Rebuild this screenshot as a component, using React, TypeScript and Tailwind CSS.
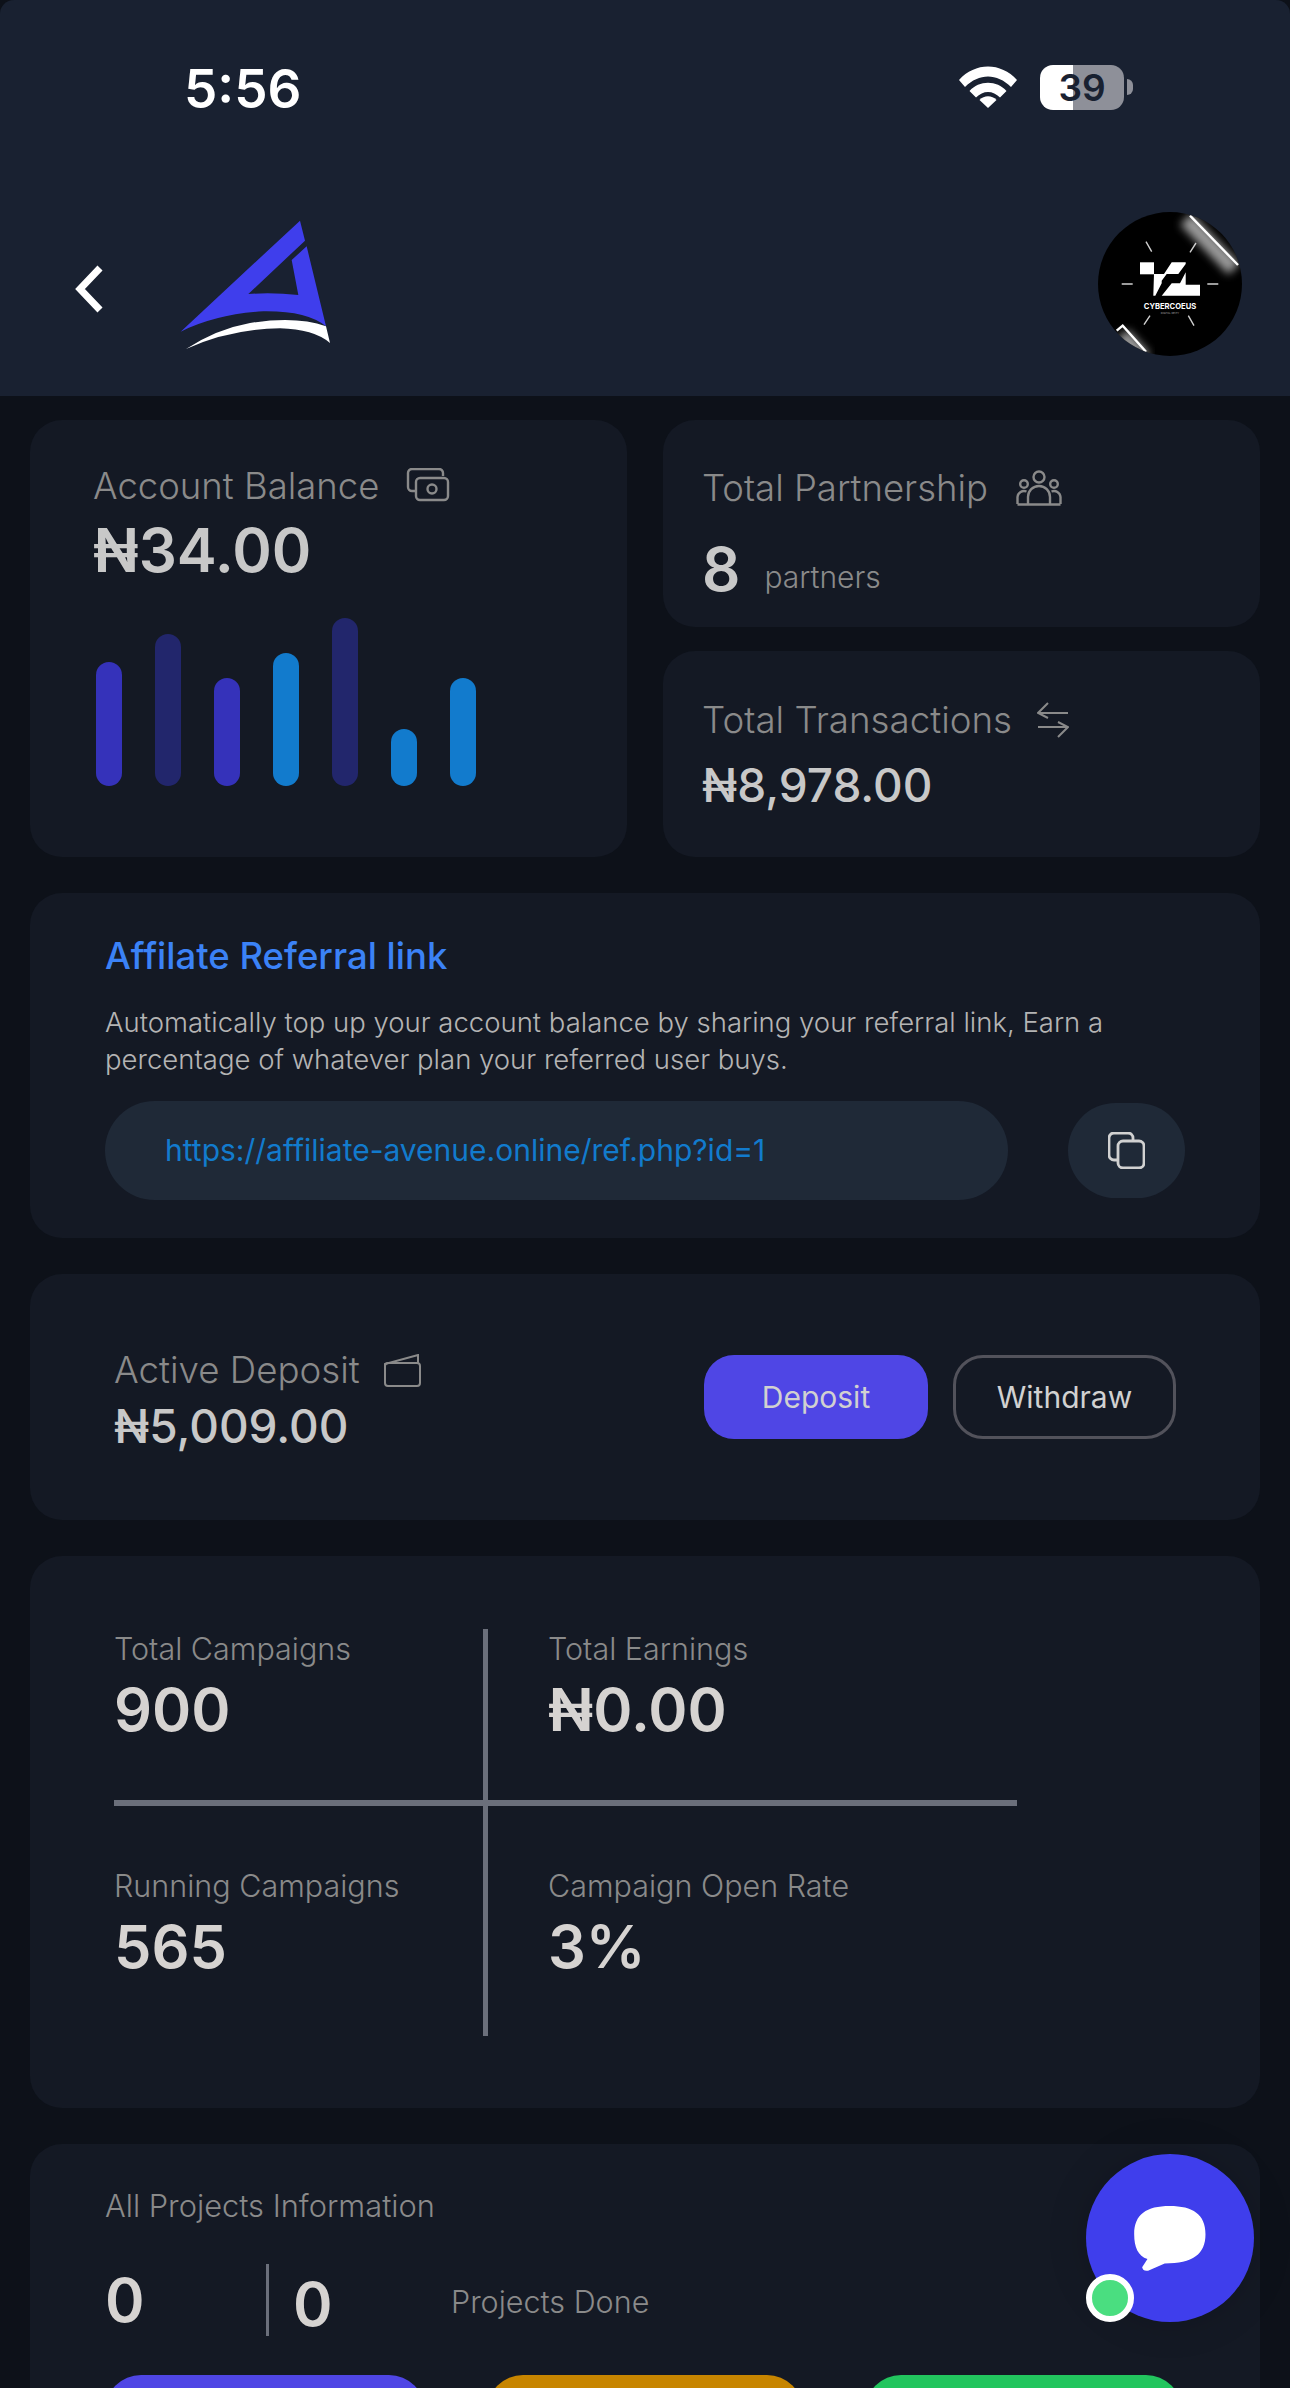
import React from "react";

const font = { fontFamily: '"Inter", "Liberation Sans", sans-serif' };

function Logo() {
  return (
    <svg viewBox="0 0 660 540" className="w-[220px] h-[180px] shrink-0">
      <path fill="#3f3eec" d="M450 95 L465 155 L295 315 Q370 310 445 318 L425 213 L470 172 L528 412 Q470 365 340 367 Q200 375 92 428 Z" />
      <path fill="#ffffff" d="M108 480 Q200 420 300 402 Q440 380 528 412 L540 462 Q490 420 390 418 Q240 420 108 480 Z" />
    </svg>
  );
}

function Avatar() {
  return (
    <svg viewBox="0 0 200 180" className="w-[200px] h-[180px] shrink-0">
      <defs>
        <clipPath id="av"><circle cx="100" cy="95" r="72" /></clipPath>
        <filter id="bl" x="-50%" y="-50%" width="200%" height="200%"><feGaussianBlur stdDeviation="4.5" /></filter>
      </defs>
      <circle cx="100" cy="95" r="72" fill="#000" />
      <g clipPath="url(#av)">
        <path d="M116 30 L164 80" stroke="#9a9a9a" strokeWidth="16" fill="none" filter="url(#bl)" />
        <path d="M52 146 L74 170" stroke="#9a9a9a" strokeWidth="16" fill="none" filter="url(#bl)" />
        <path d="M120 26.7 L168 76" stroke="#fff" strokeWidth="2.4" fill="none" />
        <path d="M46.7 141.7 L52.7 136.7 L76 162.7" stroke="#fff" strokeWidth="2.4" fill="none" />
      </g>
      <path
        stroke="#cfcfcf"
        strokeWidth="1.4"
        d="M76 52.7 L81.7 62.7 M126 54 L120 63.3 M51.7 95 L62.7 95 M137.3 95 L148.3 95 M80 126.7 L74 135.7 M118.3 126.7 L124 136.7"
      />
      <g fill="#fff">
        <rect x="70" y="73.3" width="14" height="12" />
        <polygon points="84,85 94,85 101.7,73.3 115.7,73.3 115.7,75 108.3,85 96.7,85 91.7,91.7 91.7,94.3 85.3,106.7 83.3,106.7" />
        <polygon points="91.7,106.7 101.7,94.3 110,94.3 115.7,83.3 115.7,95.7 130,95.7 130,106.7" />
      </g>
      <text x="100" y="119.5" textAnchor="middle" fill="#fff" fontSize="7.6" fontWeight="700" style={font}>CYBERCOEUS</text>
      <text x="100" y="125" textAnchor="middle" fill="#aaa" fontSize="2.6" style={font}>DIGITAL DEITY</text>
    </svg>
  );
}

function Card({ className, children }: { className?: string; children: React.ReactNode }) {
  return <div className={"bg-[#141924] rounded-[32px] " + (className ?? "")}>{children}</div>;
}

function StatCell({ label, value }: { label: string; value: string }) {
  return (
    <div>
      <div className="text-[30.5px] leading-[40px] font-light text-[#8a8a8a] whitespace-nowrap">{label}</div>
      <div className="text-[59.5px] leading-[70px] mt-[5px] font-semibold text-[#d6d3d1]">{value}</div>
    </div>
  );
}

const bars = [
  { h: "h-[124px]", c: "bg-[#3532ba]" },
  { h: "h-[152px]", c: "bg-[#22266c]" },
  { h: "h-[108px]", c: "bg-[#3532ba]" },
  { h: "h-[133px]", c: "bg-[#127bcd]" },
  { h: "h-[168px]", c: "bg-[#22266c]" },
  { h: "h-[57px]", c: "bg-[#127bcd]" },
  { h: "h-[108px]", c: "bg-[#127bcd]" },
];

export default function App() {
  return (
    <div style={font} className="relative w-[1290px] h-[2388px] overflow-hidden bg-[#0d1119]">
      {/* Header */}
      <header className="h-[396px] bg-[#192131] rounded-t-[14px]">
        <div className="flex items-center h-[176px] pl-[184px] pr-[157px] justify-between">
          <span className="text-[53px] font-semibold text-white leading-none mt-[2px]">5:56</span>
          <div className="flex items-center gap-[23px] -mt-[2px]">
            <svg viewBox="0 0 58 42" className="w-[58px] h-[42px]">
              <path fill="#fff" d="M0 14 C16 -4 42 -4 58 14 L52 21 C38 7 20 7 6 21 Z" />
              <path fill="#fff" d="M10.5 25 C20 14 38 14 47.5 25 L41 31.5 C34 24 24 24 17 31.5 Z" />
              <path fill="#fff" d="M20.5 34 C25 29 33 29 37.5 34 L29 42 Z" />
            </svg>
            <div className="flex items-center gap-[3px]">
              <div className="relative w-[84px] h-[45px] rounded-[13px] overflow-hidden flex">
                <div className="w-[33px] bg-white" />
                <div className="flex-1 bg-[#8e9099]" />
                <span className="absolute inset-0 flex items-center justify-center text-[37px] font-semibold text-[#192131] leading-none">39</span>
              </div>
              <div className="w-[6px] h-[16px] rounded-r-full bg-[#8e9099]" />
            </div>
          </div>
        </div>
        <div className="flex items-center pl-[74px] pr-[20px] h-[220px] -mt-[1px]">
          <svg viewBox="0 0 30 48" className="w-[30px] h-[48px] shrink-0 mt-[8px]">
            <path d="M26 3 L6 24 L26 45" fill="none" stroke="#fff" strokeWidth="7" />
          </svg>
          <div className="ml-[46px] -mt-[12px]"><Logo /></div>
          <div className="ml-auto -mt-[12px]"><Avatar /></div>
        </div>
      </header>

      <main className="px-[30px] pt-[24px] flex flex-col gap-[36px]">
        <div className="grid grid-cols-2 gap-x-[36px]">
          {/* Account Balance */}
          <Card className="h-[437px] pl-[63px] pt-[43px]">
            <div className="flex items-center gap-[27px] h-[46px]">
              <span className="text-[36.5px] font-light text-[#8a8a8a] leading-none">Account Balance</span>
              <svg viewBox="0 0 44 34" className="w-[44px] h-[34px] -mt-[2px]" fill="none" stroke="#8a8a8a" strokeWidth="2.4">
                <path d="M37 8 V5 a4 4 0 0 0 -4 -4 H6 a4 4 0 0 0 -4 4 V19 a4 4 0 0 0 4 4 H10" />
                <rect x="10" y="10" width="32" height="22" rx="4" />
                <circle cx="26" cy="21" r="4.5" />
              </svg>
            </div>
            <div className="text-[60px] leading-[72px] mt-[5px] font-semibold text-[#c8c8c8]">₦34.00</div>
            <div className="flex items-end gap-[33px] mt-[32px] ml-[3px]">
              {bars.map((b, i) => (
                <div key={i} className={"w-[26px] rounded-full " + b.h + " " + b.c} />
              ))}
            </div>
          </Card>

          <div className="flex flex-col gap-[24px]">
            <Card className="h-[207px] pl-[39px] pt-[45px]">
              <div className="flex items-center gap-[28px] h-[46px]">
                <span className="text-[36.5px] font-light text-[#8a8a8a] leading-none">Total Partnership</span>
                <svg viewBox="0 0 46 36" className="w-[46px] h-[36px]" fill="none" stroke="#8a8a8a" strokeWidth="2.4">
                  <circle cx="23" cy="7" r="5.5" />
                  <circle cx="8" cy="14" r="3.8" />
                  <circle cx="38" cy="14" r="3.8" />
                  <path d="M1.5 34 V27 a6.5 6.5 0 0 1 9 -5.5" />
                  <path d="M44.5 34 V27 a6.5 6.5 0 0 0 -9 -5.5" />
                  <path d="M12 34 V27 a11 11 0 0 1 22 0 V34" />
                  <path d="M1.5 34.5 H44.5" />
                </svg>
              </div>
              <div className="flex items-center gap-[24px] mt-[22px]">
                <span className="text-[60px] leading-[72px] font-semibold text-[#c8c8c8]">8</span>
                <span className="text-[30px] font-light text-[#8a8a8a] mt-[16px]">partners</span>
              </div>
            </Card>
            <Card className="h-[206px] pl-[39px] pt-[46px]">
              <div className="flex items-center gap-[25px] h-[46px]">
                <span className="text-[36.7px] font-light text-[#8a8a8a] leading-none">Total Transactions</span>
                <svg viewBox="0 0 32 36" className="w-[32px] h-[36px]" fill="none" stroke="#8a8a8a" strokeWidth="2">
                  <path d="M31 11 H2 M11 1 L1 11 L11 16" />
                  <path d="M1 25 H30 M21 20 L31 25 L21 35" />
                </svg>
              </div>
              <div className="text-[46px] leading-[58px] mt-[13px] font-medium text-[#c8c8c8]">₦8,978.00</div>
            </Card>
          </div>
        </div>

        {/* Referral */}
        <Card className="h-[345px] pl-[75px] pr-[75px] pt-[40px]">
          <div className="text-[36.5px] leading-[46px] font-medium text-[#3b82f6]">Affilate Referral link</div>
          <p className="text-[27.5px] leading-[36.5px] font-light text-[#b4b4b4] mt-[25px] whitespace-nowrap">
            Automatically top up your account balance by sharing your referral link, Earn a
            <br />
            percentage of whatever plan your referred user buys.
          </p>
          <div className="flex items-center gap-[60px] mt-[24px]">
            <div className="w-[903px] h-[99px] rounded-full bg-[#1f2937] flex items-center pl-[60px] text-[30px] font-normal text-[#127bcd]">
              https://affiliate-avenue.online/ref.php?id=1
            </div>
            <div className="w-[117px] h-[95px] rounded-full bg-[#1f2937] flex items-center justify-center">
              <svg viewBox="0 0 37 37" className="w-[37px] h-[37px]" fill="none" stroke="#d1d1d1" strokeWidth="2.8">
                <rect x="10" y="9" width="26" height="27" rx="5" />
                <path d="M10 28 H6 a5 5 0 0 1 -5 -5 V6 a5 5 0 0 1 5 -5 H20 a5 5 0 0 1 5 5 V9" />
              </svg>
            </div>
          </div>
        </Card>

        {/* Deposit */}
        <Card className="h-[246px] flex items-center justify-between pl-[84px] pr-[84px]">
          <div className="mt-[8px]">
            <div className="flex items-center gap-[24px] h-[46px]">
              <span className="text-[36.7px] font-light text-[#8a8a8a] leading-none">Active Deposit</span>
              <svg viewBox="0 0 37 33" className="w-[37px] h-[33px]" fill="none" stroke="#8a8a8a" strokeWidth="2">
                <rect x="1" y="9" width="35" height="23" rx="3" />
                <path d="M1 12 V10 L34 1 V9" />
              </svg>
            </div>
            <div className="text-[46px] leading-[58px] mt-[3px] font-medium text-[#c8c8c8]">₦5,009.00</div>
          </div>
          <div className="flex items-center gap-[25px]">
            <div className="w-[224px] h-[84px] rounded-[30px] bg-[#4f46e5] flex items-center justify-center text-[30px] text-[#d1d1d1]">Deposit</div>
            <div className="w-[223px] h-[84px] rounded-[30px] border-[3px] border-[#52525b] flex items-center justify-center text-[30px] text-[#d1d1d1]">Withdraw</div>
          </div>
        </Card>

        {/* Stats */}
        <Card className="h-[552px] pl-[84px] pt-[73px]">
          <div className="relative w-[903px] h-[407px] grid grid-cols-[434px_1fr] grid-rows-[177px_1fr]">
            <div><StatCell label="Total Campaigns" value="900" /></div>
            <div><StatCell label="Total Earnings" value="₦0.00" /></div>
            <div className="pt-[60px]"><StatCell label="Running Campaigns" value="565" /></div>
            <div className="pt-[60px]"><StatCell label="Campaign Open Rate" value="3%" /></div>
            <div className="absolute left-[369px] top-0 bottom-0 w-[5px] bg-[#6b6f7b]" />
            <div className="absolute left-0 right-0 top-[171px] h-[6px] bg-[#6b6f7b]" />
          </div>
        </Card>

        {/* Projects */}
        <Card className="h-[300px] pl-[75px] pt-[44px]">
          <div className="text-[30.8px] leading-[36px] font-light text-[#8a8a8a]">All Projects Information</div>
          <div className="flex items-center h-[72px] mt-[40px]">
            <span className="text-[60px] leading-none font-semibold text-[#d6d3d1] w-[161px] -mt-[1px]">0</span>
            <div className="w-[3px] h-[72px] bg-[#6b6f7b]" />
            <span className="text-[60px] leading-none font-semibold text-[#d6d3d1] ml-[24px] w-[158px] mt-[8px]">0</span>
            <span className="text-[30.5px] font-light text-[#8a8a8a] mt-[4px]">Projects Done</span>
          </div>
          <div className="flex gap-[62px] mt-[39px]">
            <div className="w-[320px] h-[90px] rounded-[36px] bg-[#4f46e5]" />
            <div className="w-[316px] h-[90px] rounded-[36px] bg-[#c78500]" />
            <div className="w-[317px] h-[90px] rounded-[36px] bg-[#22c55e]" />
          </div>
        </Card>
      </main>

      {/* Chat button */}
      <div className="absolute left-[1086px] top-[2154px] w-[168px] h-[168px] rounded-full bg-[#3f3eec] flex items-center justify-center shadow-[0_0_40px_rgba(0,0,0,0.15)]">
        <svg viewBox="160 42 222 202" className="w-[74px] h-[67px]">
          <path fill="#fff" d="M270 45 C340 45 378 70 378 130 C378 190 340 218 255 218 L205 240 Q190 243 187 230 L203 205 C175 195 163 170 163 130 C163 70 200 45 270 45 Z" />
        </svg>
        <div className="absolute left-0 bottom-0 w-[48px] h-[48px] rounded-full bg-[#4ade80] border-[6px] border-white" />
      </div>
    </div>
  );
}
